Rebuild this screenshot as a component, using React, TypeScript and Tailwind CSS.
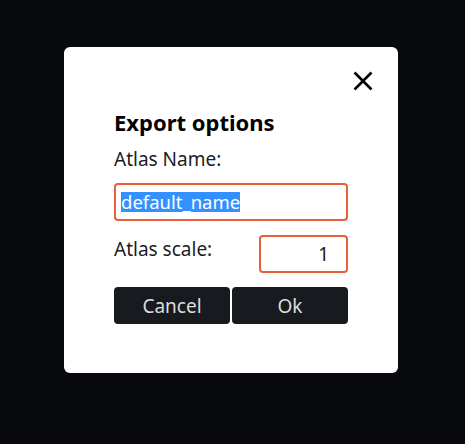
import React from 'react';

export default function App() {
  return (
    <div className="w-[465px] h-[444px] bg-[#080a0e] pt-[47px] pl-[64px]" style={{ fontFamily: '"Noto Sans", "Open Sans", sans-serif' }}>
      <div className="w-[334px] h-[326px] bg-white rounded-[6px] flex flex-col px-[50px]">
        {/* Close */}
        <div className="flex justify-end pt-[24px] mr-[-25px]">
          <svg width="20" height="20" viewBox="0 0 20 20" className="block">
            <path d="M1.5 1.5 L18.5 18.5 M18.5 1.5 L1.5 18.5" stroke="#000" strokeWidth="2.6" strokeLinecap="butt" />
          </svg>
        </div>

        <h1 className="mt-[17px] text-[22px] leading-[28px] font-bold text-black">Export options</h1>
        <div className="mt-[11px] text-[19px] leading-[24px] text-[#1c1c1c]">Atlas Name:</div>

        <div className="mt-[12px] h-[38px] border-2 border-[#e8603a] rounded-[4px] flex items-center px-[5px]">
          <span className="inline-block bg-[#3390ff] text-white text-[18.5px] leading-[20px] h-[20px]">default_name</span>
        </div>

        <div className="mt-[14px] flex items-start justify-between">
          <span className="mt-[2px] text-[19px] leading-[24px] text-[#1c1c1c]">Atlas scale:</span>
          <div className="w-[89px] h-[38px] border-2 border-[#e8603a] rounded-[4px] flex items-center justify-end pr-[17px] text-[19px] leading-[24px] text-[#1c1c1c]">
            1
          </div>
        </div>

        <div className="mt-[14px] flex gap-[2px]">
          <button className="w-[116px] h-[37px] bg-[#171b1f] text-[#dcdcdc] rounded-[4px] text-[19px] leading-[24px]">Cancel</button>
          <button className="w-[116px] h-[37px] bg-[#171b1f] text-[#dcdcdc] rounded-[4px] text-[19px] leading-[24px]">Ok</button>
        </div>
      </div>
    </div>
  );
}
